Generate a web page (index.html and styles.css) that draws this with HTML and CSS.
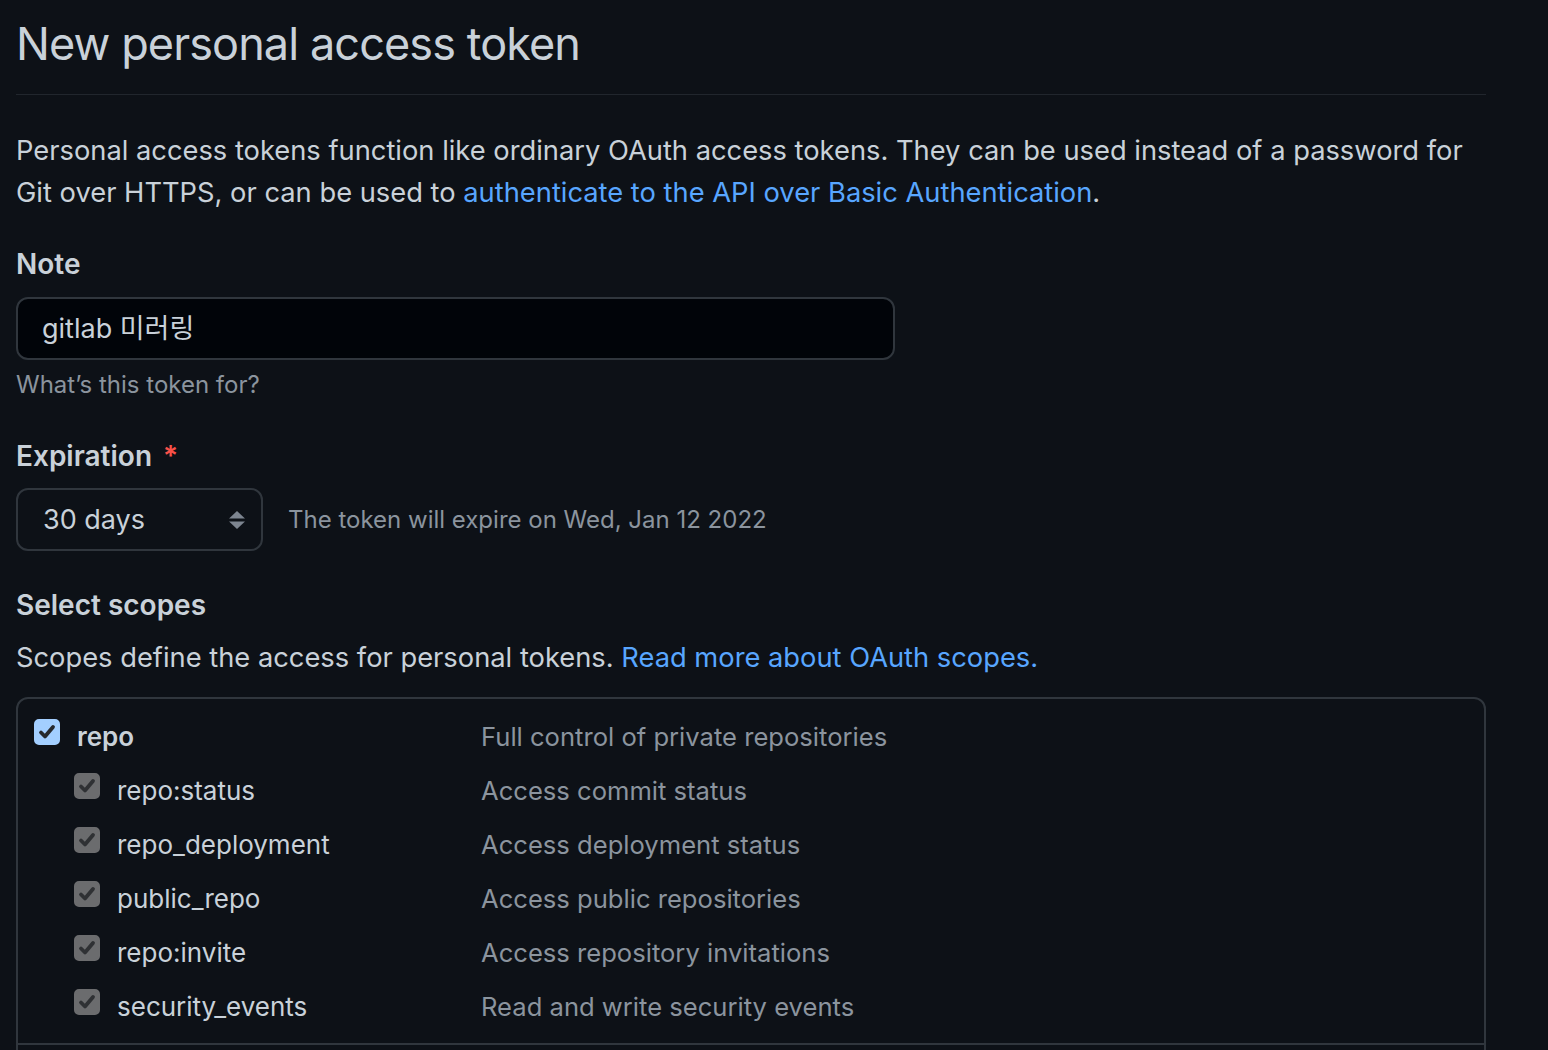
FILE: index.html
```html
<!DOCTYPE html>
<html lang="en">
<head>
    <meta charset="UTF-8">
    <meta name="viewport" content="width=device-width, initial-scale=1.0">
    <title>New personal access token</title>
    <link rel="stylesheet" href="styles.css">
</head>
<body>
    <div class="container">
        <div class="subhead">
            <h2>New personal access token</h2>
        </div>

        <p class="intro">
            Personal access tokens function like ordinary OAuth access tokens. They can be used instead of a password for
            Git over HTTPS, or can be used to <a href="#">authenticate to the API over Basic Authentication</a>.
        </p>

        <div class="form-group note-group">
            <label class="form-label" for="token-note">Note</label>
            <input class="form-input" id="token-note" type="text" value="gitlab 미러링">
            <p class="note">What’s this token for?</p>
        </div>

        <div class="form-group expiry-group">
            <label class="form-label">Expiration <span class="required">*</span></label>
            <div class="expiry-row">
                <div class="select">
                    <span>30 days</span>
                    <svg class="select-arrows" width="18" height="20" viewBox="0 0 18 20">
                        <path d="M9 1 L17 8.5 L1 8.5 Z" fill="#7d8590"/>
                        <path d="M1 11.5 L17 11.5 L9 19 Z" fill="#7d8590"/>
                    </svg>
                </div>
                <span class="note">The token will expire on Wed, Jan 12 2022</span>
            </div>
        </div>

        <div class="form-group scopes-group">
            <label class="form-label">Select scopes</label>
            <p class="scopes-intro">Scopes define the access for personal tokens. <a href="#">Read more about OAuth scopes.</a></p>

            <div class="scopes">
                <div class="scope-group">
                    <div class="scope-row">
                        <div class="scope-name">
                            <span class="checkbox checked">
                                <svg width="20" height="20" viewBox="0 0 20 20"><path d="M4 10.5 L8 14.5 L16 5" fill="none" stroke="#26292d" stroke-width="3.8" stroke-linecap="round" stroke-linejoin="round"/></svg>
                            </span>
                            <span class="parent-name">repo</span>
                        </div>
                        <div class="scope-desc">Full control of private repositories</div>
                    </div>
                    <div class="scope-row child">
                        <div class="scope-name">
                            <span class="checkbox disabled">
                                <svg width="20" height="20" viewBox="0 0 20 20"><path d="M4 10.5 L8 14.5 L16 5" fill="none" stroke="#2f3134" stroke-width="3.8" stroke-linecap="round" stroke-linejoin="round"/></svg>
                            </span>
                            <span>repo:status</span>
                        </div>
                        <div class="scope-desc">Access commit status</div>
                    </div>
                    <div class="scope-row child">
                        <div class="scope-name">
                            <span class="checkbox disabled">
                                <svg width="20" height="20" viewBox="0 0 20 20"><path d="M4 10.5 L8 14.5 L16 5" fill="none" stroke="#2f3134" stroke-width="3.8" stroke-linecap="round" stroke-linejoin="round"/></svg>
                            </span>
                            <span>repo_deployment</span>
                        </div>
                        <div class="scope-desc">Access deployment status</div>
                    </div>
                    <div class="scope-row child">
                        <div class="scope-name">
                            <span class="checkbox disabled">
                                <svg width="20" height="20" viewBox="0 0 20 20"><path d="M4 10.5 L8 14.5 L16 5" fill="none" stroke="#2f3134" stroke-width="3.8" stroke-linecap="round" stroke-linejoin="round"/></svg>
                            </span>
                            <span>public_repo</span>
                        </div>
                        <div class="scope-desc">Access public repositories</div>
                    </div>
                    <div class="scope-row child">
                        <div class="scope-name">
                            <span class="checkbox disabled">
                                <svg width="20" height="20" viewBox="0 0 20 20"><path d="M4 10.5 L8 14.5 L16 5" fill="none" stroke="#2f3134" stroke-width="3.8" stroke-linecap="round" stroke-linejoin="round"/></svg>
                            </span>
                            <span>repo:invite</span>
                        </div>
                        <div class="scope-desc">Access repository invitations</div>
                    </div>
                    <div class="scope-row child">
                        <div class="scope-name">
                            <span class="checkbox disabled">
                                <svg width="20" height="20" viewBox="0 0 20 20"><path d="M4 10.5 L8 14.5 L16 5" fill="none" stroke="#2f3134" stroke-width="3.8" stroke-linecap="round" stroke-linejoin="round"/></svg>
                            </span>
                            <span>security_events</span>
                        </div>
                        <div class="scope-desc">Read and write security events</div>
                    </div>
                </div>

                <div class="scope-group">
                    <div class="scope-row">
                        <div class="scope-name">
                            <span class="checkbox"></span>
                            <span class="parent-name">workflow</span>
                        </div>
                        <div class="scope-desc">Update GitHub Action workflows</div>
                    </div>
                </div>
            </div>
        </div>
    </div>
</body>
</html>
```

FILE: styles.css
```css
* {
    margin: 0;
    padding: 0;
    box-sizing: border-box;
}

body {
    font-family: Inter, "Noto Sans CJK KR", sans-serif;
    font-size: 27.3px;
    line-height: 42px;
    background-color: #0d1117;
    color: #c9d1d9;
}

a {
    color: #58a6ff;
    text-decoration: none;
}

.container {
    padding: 14px 62px 0 16px;
}

.subhead {
    padding-bottom: 20px;
    border-bottom: 1px solid #21262d;
}

.subhead h2 {
    font-size: 45px;
    font-weight: 400;
    line-height: 60px;
    letter-spacing: -0.9px;
}

.intro {
    margin-top: 35px;
}

.form-group {
    display: flex;
    flex-direction: column;
    align-items: flex-start;
}

.note-group {
    margin-top: 29px;
}

.expiry-group {
    margin-top: 32px;
}

.scopes-group {
    margin-top: 33px;
    align-items: stretch;
}

.form-label {
    display: block;
    font-size: 28px;
    font-weight: 600;
}

.required {
    color: #f85149;
    margin-left: 4px;
}

.form-input {
    margin-top: 12px;
    width: 879px;
    height: 63px;
    padding: 0 24px 5px;
    font-family: Inter, "Noto Sans CJK KR", sans-serif;
    font-size: 27px;
    color: #c9d1d9;
    background-color: #010409;
    border: 2px solid #30363d;
    border-radius: 12px;
    outline: none;
}

.note {
    color: #8b949e;
    font-size: 24px;
    line-height: 36px;
    margin-top: 7px;
}

.expiry-row {
    display: flex;
    align-items: center;
    gap: 25px;
    margin-top: 11px;
}

.expiry-row .note {
    margin-top: 0;
}

.select {
    display: flex;
    align-items: center;
    justify-content: space-between;
    width: 247px;
    height: 63px;
    padding: 0 15px 0 25px;
    border: 2px solid #30363d;
    border-radius: 12px;
    font-size: 27px;
    color: #c9d1d9;
}

.scopes-intro {
    margin-top: 11px;
}

.scopes {
    margin-top: 18px;
    border: 2px solid #30363d;
    border-radius: 12px;
}

.scope-group {
    padding: 11px 0 9px;
    border-bottom: 2px solid #30363d;
}

.scope-row {
    display: grid;
    grid-template-columns: 463px 1fr;
    height: 54px;
    font-size: 26px;
    line-height: 54px;
}

.scope-name {
    display: flex;
    align-items: flex-start;
    gap: 17px;
    padding-left: 16px;
}

.scope-row.child .scope-name {
    padding-left: 56px;
}

.parent-name {
    font-weight: 600;
}

.scope-desc {
    color: #8b949e;
    font-size: 25.6px;
}

.checkbox {
    display: flex;
    align-items: center;
    justify-content: center;
    width: 26px;
    height: 26px;
    margin-top: 9px;
    border-radius: 5px;
    border: 2px solid #6e7681;
}

.checkbox.checked {
    background-color: #a3cfff;
    border-color: #a3cfff;
}

.checkbox.disabled {
    background-color: #6b6c6e;
    border-color: #6b6c6e;
}
```
